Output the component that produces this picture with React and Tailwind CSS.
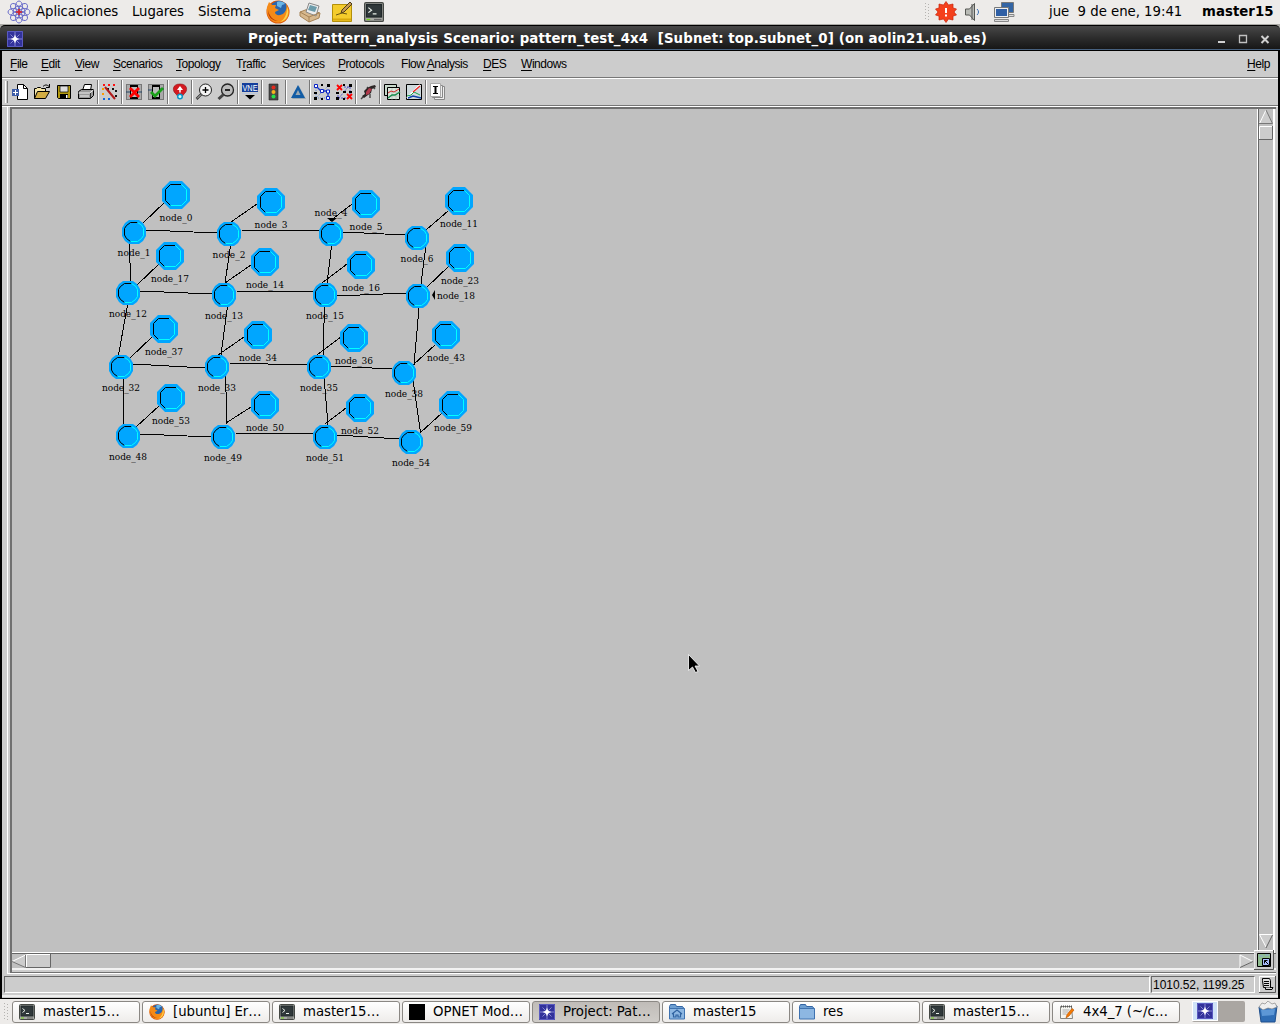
import React from "react";

const bigNodes = [
  ["node_0", 176, 195], ["node_3", 271, 202], ["node_5", 366, 204], ["node_11", 459, 201],
  ["node_17", 170, 256], ["node_14", 265, 262], ["node_16", 361, 265], ["node_23", 460, 258],
  ["node_37", 164, 329], ["node_34", 258, 335], ["node_36", 354, 338], ["node_43", 446, 335],
  ["node_53", 171, 398], ["node_50", 265, 405], ["node_52", 360, 408], ["node_59", 453, 405],
];

// name, x, y, optional label x, optional label baseline
const smallNodes = [
  ["node_1", 134, 232], ["node_2", 229, 234], ["node_4", 331, 234, 331, 216], ["node_6", 417, 238],
  ["node_12", 128, 293], ["node_13", 224, 295], ["node_15", 325, 295], ["node_18", 418, 296, 456, 299],
  ["node_32", 121, 367], ["node_33", 217, 367], ["node_35", 319, 367], ["node_38", 404, 373],
  ["node_48", 128, 436], ["node_49", 223, 437], ["node_51", 325, 437], ["node_54", 411, 442],
];

const links = [
  [146, 230, 217, 233], [241, 230, 320, 231], [343, 232, 405, 235],
  [140, 291, 212, 294], [236, 291, 313, 292], [337, 296, 406, 293],
  [133, 364, 205, 368], [229, 363, 307, 365], [331, 366, 392, 369],
  [140, 434, 211, 437], [235, 433, 313, 434], [337, 435, 399, 439],
  [129.5, 243, 130.5, 281], [230.5, 246, 225, 283], [331.5, 246, 327, 284], [426, 245, 421, 284],
  [127.5, 305, 118.5, 355], [227.5, 306, 221, 355], [324.5, 307, 323, 355], [419, 308, 414, 365],
  [123.5, 379, 123.5, 425], [225.5, 375, 227, 424], [324, 377, 328, 425], [413, 380, 420.5, 432],
  [143, 223, 165, 202], [231, 222, 257, 204], [330, 221, 352, 204], [426, 230, 448, 211],
  [137, 285, 159, 264], [225, 283, 251, 265], [322, 283, 347, 264], [426, 288, 449, 266],
  [129, 359, 153, 336], [218, 355, 244, 337], [317, 355, 341, 337], [413, 365, 435, 345],
  [136, 427, 160, 405], [226, 423, 251, 407], [325, 424, 346, 408], [420, 433, 442, 413],
];

function NodeLabel({ name, x, y }) {
  return (
    <text x={x} y={y} textAnchor="middle" fontSize="9" textLength={name.length === 6 ? 33 : 38} fontFamily="'DejaVu Serif', serif" fill="#000">
      {name}
    </text>
  );
}

function Network() {
  return (
    <svg width="1245" height="843" viewBox="12 109 1245 843" className="block">
      <g stroke="#000" strokeWidth="1" shapeRendering="crispEdges">
        {links.map(([a, b, c, d], i) => <line key={i} x1={a} y1={b} x2={c} y2={d} />)}
      </g>
      <path d="M327 218h10l-5 4zM432 295l3-5v10z" />
      {bigNodes.map(([n, x, y]) => (
        <g key={n}>
          <g transform={`translate(${x} ${y})`} fill="none">
            <path d="M-6-14H6L14-6V6L6 14H-6L-14 6V-6Z" fill="#00a6ff" />
            <path d="M-5.5 10.5L-10.5 5.5V-5.5L-5.5-10.5H5" stroke="#000" />
            <path d="M5.5-10.5L10.5-5.5V5.5L5.5 10.5H-5.5" stroke="#00ffff" />
          </g>
          <NodeLabel name={n} x={x} y={y + 26} />
        </g>
      ))}
      {smallNodes.map(([n, x, y, lx, ly]) => (
        <g key={n}>
          <g transform={`translate(${x} ${y})`} fill="none">
            <path d="M-5-12H5L9-9L12-4V4L9 9L5 12H-5L-9 9L-12 4V-4L-9-9Z" fill="#00a6ff" />
            <path d="M-3.5 9.5L-7.5 6.5L-9.5 3V-3.5L-7.5-6.5L-3.5-9.5H3.5" stroke="#000" />
            <path d="M3.5-9.5L7.5-7L9.5-3.5V3.5L7.5 6.5L3.5 9.5H-3.5" stroke="#00ffff" />
          </g>
          <NodeLabel name={n} x={lx || x} y={ly || y + 24} />
        </g>
      ))}
      <path d="M688.5 654.5v16l4-3.500 3 5.500 2.500-1-3-5.500h4.500z" fill="#000" stroke="#fff" strokeWidth=".8" />
    </svg>
  );
}

function TermIcon({ s = 16 }) {
  return (
    <svg width={s} height={s} viewBox="0 0 16 16" className="block shrink-0">
      <rect x=".5" y=".5" width="15" height="15" rx="1" fill="#a8aaa5" stroke="#454844" />
      <rect x="2" y="2" width="12" height="10" fill="#30383a" stroke="#20282a" />
      <path d="M3.500 4.500l2.500 2-2.500 2M7 9.500h3" stroke="#e8efe8" fill="none" />
      <path d="M2 14h3" stroke="#73d216" />
      <path d="M8 14h6" stroke="#666" />
    </svg>
  );
}

function Firefox({ s = 16 }) {
  return (
    <svg width={s} height={s} viewBox="0 0 24 24" className="block shrink-0">
      <circle cx="12" cy="12" r="11.500" fill="#d9560b" />
      <circle cx="13" cy="9.500" r="8.800" fill="#2a65ad" />
      <path d="M11 2c4-1 7 0 8 2l-3 1-1 3-4-2z" fill="#6ab5e6" />
      <path d="M1 7L3 2l3 3 4 0-1 3 4 2-4 2c0 4 6 4 9 1 2-2 3-5 2-9 5 6 4 15-4 18C9 25-1 19 1 7z" fill="#f58a17" />
      <path d="M21 7c3 6 0 14-7 15 5-3 7-8 7-15z" fill="#ffd24a" />
      <path d="M2 10c1 6 5 10 10 11-6 0-10-4-10-11z" fill="#b53304" />
    </svg>
  );
}

function Star({ s = 16 }) {
  return (
    <svg width={s} height={s} viewBox="0 0 16 16" className="block shrink-0">
      <rect width="16" height="16" fill="#32329b" />
      <path d="M.5.500h15v15H.500z" stroke="#5a5ac0" fill="none" />
      <path d="M8 1v14M1 8h14M3.500 3.500l9 9M12.500 3.500l-9 9" stroke="#9c9cdf" strokeWidth=".8" />
      <path d="M8 3.500l1.200 3.300L12.500 8 9.200 9.200 8 12.500 6.800 9.200 3.500 8l3.300-1.200z" fill="#fff" />
    </svg>
  );
}

function Folder({ home }) {
  return (
    <svg width="16" height="16" viewBox="0 0 16 16" className="block shrink-0">
      <path d="M.500 14.500v-12l1-2h5l1 2h6l1.500 2v10z" fill="#6d9fd2" stroke="#3465a4" />
      <path d="M.500 4.500h15v10.500H.500z" fill="#8db7e2" stroke="#3f72b0" />
      {home && <path d="M3 10l5-4 5 4M4.500 9.500V13H7v-2h2v2h2.500V9.500" fill="none" stroke="#2f62a0" strokeWidth="1.200" />}
    </svg>
  );
}

function NoteIcon() {
  return (
    <svg width="16" height="16" viewBox="0 0 16 16" className="block shrink-0">
      <path d="M1.500 2.500h11l1 12h-12z" fill="#f5f5f0" stroke="#85857f" />
      <path d="M2 2.500h11" stroke="#555" strokeWidth="2" strokeDasharray="1 1" />
      <path d="M3.500 6h7M3.500 8h6M3.500 10h4" stroke="#aaa" />
      <path d="M7 14l1-3.500 5-6 2 1.500-5 6z" fill="#f57900" stroke="#b45100" strokeWidth=".6" />
    </svg>
  );
}

const tools = [
  [<g><path d="M5.500.500h6l4 4v11h-10z" fill="#fff" stroke="#000" /><path d="M11.500.500v4h4" fill="none" stroke="#000" /><rect y="5" width="7" height="7" fill="#3d5da8" /><path d="M1 8.500h5M3.500 6v5" stroke="#fff" /></g>,
   <g><path d="M.500 14.500v-10h2l1-1h3l1 1h4v3" fill="#f7e8a8" stroke="#000" /><path d="M.500 14.500l3-7h12l-4 7z" fill="#d3ad43" stroke="#000" /><path d="M9 2.500c2-2 4-2 6 0M15.500 0v3.500H12" fill="none" stroke="#000" /></g>,
   <g><path d="M1.500 1.500h13v13h-12l-1-1z" fill="#b49a10" stroke="#000" /><path d="M4 2h8v6H4z" fill="#ddd" stroke="#000" strokeWidth=".7" /><path d="M4 10h8v5H4z" fill="#000" /><path d="M10 11h1.500v3H10z" fill="#fff" /></g>,
   <g><path d="M4.500 6.500l2-6h7l-1 6" fill="#fff" stroke="#000" /><path d="M.500 7.500l3-2h12v6l-3 3H.500z" fill="#999" stroke="#000" /><path d="M.500 9h11l4-3M2 12h9" stroke="#eee" fill="none" /><path d="M12.500 9v5" stroke="#333" /></g>],
  [<g strokeWidth="2" strokeDasharray="2 3"><path d="M1 1h14" stroke="#f11" /><path d="M1 4v10" stroke="#f90" /><path d="M1 15h8" stroke="#16d" /><path d="M5 5h9v10" stroke="#111" fill="none" /><path d="M3 3l10 12" stroke="#b11a1a" strokeDasharray="none" /></g>],
  [<g><rect x=".5" y=".5" width="15" height="15" fill="#aaa" stroke="#777" /><path d="M4.500 1.500h7v13h-7z" fill="#bbb" stroke="#000" /><path d="M4 2h8M4 14h8" stroke="#000" strokeWidth="2" /><path d="M0 8h4M12 8h4" stroke="#246" /><path d="M4 4l9 9M13 4l-9 9" stroke="#f00" strokeWidth="2.800" /></g>,
   <g><rect x=".5" y=".5" width="15" height="15" fill="#aaa" stroke="#777" /><path d="M4.500 1.500h7v13h-7z" fill="#bbb" stroke="#000" /><path d="M4 2h8M4 14h8" stroke="#000" strokeWidth="2" /><path d="M0 6h4M12 5h4" stroke="#246" /><path d="M3 8l4 4 8-8" stroke="#1aa01a" strokeWidth="2.800" fill="none" /></g>],
  [<g><path d="M8 0c8 0 8 7 4 10l-3 4H7l-3-4C0 7 0 0 8 0z" fill="#d41920" stroke="#8b0d10" strokeWidth=".6" /><path d="M8 3.500v5" stroke="#fff" strokeWidth="1.500" /><path d="M5 6l3-4 3 4z" fill="#fff" /><circle cx="8" cy="12.500" r="2.300" fill="#cff" stroke="#0996c8" strokeWidth="1.500" /></g>],
  [<g><circle cx="9.500" cy="6" r="6" fill="#f4f4f4" stroke="#222" /><path d="M6.500 6h6M9.500 3v6" stroke="#000" strokeWidth="1.300" /><path d="M5.500 10l-5 5" stroke="#333" strokeWidth="2.500" /><path d="M5 10.500l-4 4" stroke="#ccc" /></g>,
   <g><circle cx="9.500" cy="6" r="6" fill="#bbb" stroke="#222" strokeWidth="1.300" /><path d="M7 6h5" stroke="#000" strokeWidth="1.600" /><path d="M5.500 10.500l-5 4.500" stroke="#444" strokeWidth="3" /></g>],
  [<g><rect x="0" y="-1" width="16" height="9" fill="#153f9b" /><text x="8" y="7" textAnchor="middle" textLength="15" lengthAdjust="spacingAndGlyphs" fontSize="9" fontFamily="'Liberation Sans', sans-serif" fill="#fff">VNE</text><path d="M0 9.500h16" stroke="#b9c7df" /><path d="M3 11h10l-5 4.500z" fill="#000" /></g>],
  [<g><path d="M3 0h9v16H3z" fill="#484848" stroke="#222" strokeWidth=".6" /><circle cx="7.500" cy="3.500" r="2" fill="#e42a1e" /><circle cx="7.500" cy="8" r="2" fill="#f5b21d" /><circle cx="7.500" cy="12.500" r="2" fill="#25e048" /></g>],
  [<g><path d="M2 15h14L9 2z" fill="#9aa8b2" /><path d="M1 14h14L8 1zM5.500 11h5L8 6z" fill="#125ca5" fillRule="evenodd" /></g>],
  [<g><path d="M2 2l5 5h7v7" stroke="#1538c8" fill="none" strokeWidth="1.300" /><path d="M2 2v12h12M2 14L14 2" stroke="#6688cc" strokeDasharray="1 1" fill="none" /><path d="M7 0h2v2H7zM13 0h3v3h-3zM0 8h3v2H0zM0 13h3v3H0zM7 14h2v2H7z" fill="#000" /><path d="M.5.500h3v3h-3zM6.500 5.500h3v3h-3zM12.500 6h3v3h-3zM12.500 12.500h3v3h-3z" fill="#fff" stroke="#0a22c4" /></g>,
   <g><path d="M2 8v6h12M8 3h6v9M3 14L12 3" stroke="#55c" strokeDasharray="2 1" fill="none" /><path d="M7 0h2v2H7zM13 0h3v3h-3zM0 8h3v2H0zM0 13h3v3H0zM7 14h2v2H7zM13 7h3v2h-3zM7 7h3v2H7z" fill="#000" /><path d="M1 1l5 5M6 1L1 6M11 10l5 5M16 10l-5 5" stroke="#f00" strokeWidth="1.800" /></g>],
  [<g><path d="M1 15l4-4M7 3l2 2M13 3l2 2M10 10v4" stroke="#444" strokeWidth="1.400" fill="none" /><path d="M4 7l3-3 4-2 4-1 1 2-4 2-1 4-3 2-4 3-2-2 3-2z" fill="#2c2626" /><path d="M6 8l3-4 3 1-3 5-3 1z" fill="#b03a4c" /></g>],
  [<g><path d="M.5.500h12v11H.500z" fill="#c9d9cc" stroke="#000" /><path d="M3.500 3.500h12v12h-12z" fill="#dce7dd" stroke="#000" /><path d="M4 8h12M4 12h12M8 4v12M12 4v12" stroke="#aaa" strokeWidth=".5" /><path d="M4 9l3-2 3 1 5-3" stroke="#d52b2b" fill="none" /><path d="M4 14l4-3h3l5-3" stroke="#178b4b" fill="none" strokeWidth="1.400" /></g>,
   <g><path d="M.5.500h15v15H.500z" fill="#cfdadd" stroke="#000" /><path d="M1 14L14 1" stroke="#fff" strokeWidth="2" /><path d="M1 12l4-1 3-3 6 3" stroke="#19a24b" fill="none" /><path d="M7 8l7-6" stroke="#e22" strokeWidth="1.300" /><path d="M2 14l5-2 8 2" stroke="#14a" fill="none" strokeWidth="1.500" /></g>],
  [<g><path d="M4.500 2.500h10v13h-10z" fill="#eee" stroke="#888" /><path d="M2.500 1.500h10v12h-10z" fill="#eee" stroke="#888" /><path d="M.500-.500h10v13h-10z" fill="#fff" stroke="#aaa" /><path d="M3 2.500h5M3 9.500h5" stroke="#000" /><path d="M5.500 2v8" stroke="#000" strokeWidth="2" /></g>],
];

function Separator() {
  return <div className="w-[2px] h-[24px] bg-[#777] border-r border-white shrink-0" />;
}

const menus = [
  ["w-[31px]", "", "F", "ile"], ["w-[34px]", "", "E", "dit"], ["w-[38px]", "", "V", "iew"],
  ["w-[63px]", "", "S", "cenarios"], ["w-[60px]", "", "T", "opology"], ["w-[46px]", "T", "r", "affic"],
  ["w-[56px]", "Ser", "v", "ices"], ["w-[63px]", "", "P", "rotocols"], ["w-[82px]", "Flow ", "A", "nalysis"],
  ["w-[38px]", "", "D", "ES"], ["w-[60px]", "", "W", "indows"],
];

const tasks = [
  [<TermIcon />, "master15…"], [<Firefox />, "[ubuntu] Er…"], [<TermIcon />, "master15…"],
  [<span className="block size-4 bg-black shrink-0" />, "OPNET Mod…"], [<Star />, "Project: Pat…"],
  [<Folder home />, "master15"], [<Folder />, "res"], [<TermIcon />, "master15…"], [<NoteIcon />, "4x4_7 (~/c…"],
];

function Grip() {
  return (
    <svg width="6" height="18" viewBox="0 0 6 18" className="block shrink-0">
      <path d="M1.500 0v18M4.500 1v17" stroke="#b5b3b0" strokeDasharray="1 2" />
    </svg>
  );
}

function TopPanel() {
  return (
    <div className="h-[25px] shrink-0 flex items-center bg-[#edebe9] border-b border-[#aaa9a5] pl-[7px] text-[13.3px] tracking-[-0.08px]">
      <svg width="24" height="24" viewBox="-12 -12 24 24" className="shrink-0 mr-[5px]">
        <g fill="none" stroke="#5a5ec5" strokeWidth=".9">
          {[0, 45, 90, 135, 180, 225, 270, 315].map((a) => <ellipse key={a} cx="5.500" cy="0" rx="5.500" ry="3.500" transform={`rotate(${a})`} />)}
          <circle r="6" />
        </g>
        <path d="M-3 0h6M0-3v6" stroke="#d22" strokeWidth="1.500" />
      </svg>
      <span className="w-[96px]">Aplicaciones</span>
      <span className="w-[66px]">Lugares</span>
      <span className="w-[68px]">Sistema</span>
      <Firefox s={24} />
      <svg width="22" height="22" viewBox="0 0 22 22" className="ml-[9px] shrink-0">
        <path d="M1 11l8-3 12 4-1 5-10 4-9-6z" fill="#d7b88d" stroke="#a58256" />
        <path d="M10 2l10 3-3 10-10-4z" fill="#eee" stroke="#888" />
        <path d="M11 4l7 2-2 5-7-2z" fill="#6d9cab" />
        <path d="M1 11l9 5 10-4M10 16v5" fill="none" stroke="#a58256" />
      </svg>
      <svg width="22" height="22" viewBox="0 0 22 22" className="ml-[10px] shrink-0">
        <path d="M1.500 3.500h19v17h-19z" fill="#f4cc2c" stroke="#b38f0a" />
        <path d="M2 18.500h18" stroke="#d8a90c" strokeWidth="2" />
        <path d="M10 12l1-3 8-8 2 2-8 8z" fill="#c79a50" stroke="#4b3b1c" />
        <path d="M5 14l6-2 5 1" stroke="#6b5610" fill="none" />
      </svg>
      <div className="ml-[11px]"><TermIcon s={20} /></div>
      <div className="ml-[540px]"><Grip /></div>
      <svg width="22" height="22" viewBox="-11 -11 22 22" className="ml-[5px] shrink-0">
        <path d="M0-10.500L2.500-7 7-8 7-4 10.500-3 8 0 10.500 3 7 4 7 8 2.500 7 0 10.500-2.500 7-7 8-7 4-10.500 3-8 0-10.500-3-7-4-7-8-2.500-7z" fill="#f4401c" stroke="#c9240a" strokeWidth=".7" />
        <path d="M0-4V1M0 2.500v2" stroke="#fff" strokeWidth="2" />
      </svg>
      <svg width="16" height="20" viewBox="0 0 16 20" className="ml-[8px] shrink-0">
        <path d="M.500 7h4l5-5.500v17L4.500 13h-4z" fill="#b9bbb6" stroke="#555753" />
        <path d="M7 2v16" stroke="#555" /><path d="M12 7c2 2 2 4 0 6" fill="none" stroke="#3b6fb0" />
      </svg>
      <svg width="22" height="22" viewBox="0 0 22 22" className="ml-[12px] shrink-0">
        <path d="M8.500 1.500h12v10h-12z" fill="#3465a4" stroke="#77797a" /><path d="M12 13.500h9v2h-9z" fill="#ddd" stroke="#888" />
        <path d="M1.500 6.500h14v10h-14z" fill="#eee" stroke="#77797a" /><path d="M3 8h11v7H3z" fill="#2f5fa5" /><path d="M1.500 18.500h14v2h-14z" fill="#ddd" stroke="#888" />
      </svg>
      <span className="ml-[34px] w-[153px] whitespace-pre tracking-[-0.03px]">jue  9 de ene, 19:41</span>
      <span className="font-bold whitespace-nowrap tracking-[0.05px]">master15</span>
    </div>
  );
}

function TitleBar() {
  return (
    <div className="shrink-0 bg-[#aaa9a5]">
      <div className="h-[26px] flex items-center border-t border-b border-black bg-linear-to-b from-[#484848] via-[#2c2c2c] to-[#151515] rounded-t-[5px] pl-[7px] pt-[2px] shadow-[inset_0_-1px_0_#47617f]">
        <Star />
        <span className="ml-[225px] w-[970px] text-[13.33px] tracking-[0.12px] font-bold text-white whitespace-pre">Project: Pattern_analysis Scenario: pattern_test_4x4  [Subnet: top.subnet_0] (on aolin21.uab.es)</span>
        <svg width="54" height="12" viewBox="0 0 54 12" className="shrink-0">
          <path d="M-1 9h8" stroke="#d0d0d0" strokeWidth="2" />
          <path d="M21.500 2.500h7v7h-7z" fill="none" stroke="#c0c0c0" strokeWidth="1.300" />
          <path d="M43.500 3l7 7M50.500 3l-7 7" stroke="#d0d0d0" strokeWidth="2" />
        </svg>
      </div>
    </div>
  );
}

export default function App() {
  return (
    <div className="w-[1280px] h-[1024px] overflow-hidden flex flex-col bg-[#edebe9] text-black font-['DejaVu_Sans',sans-serif]">
      <TopPanel />
      <TitleBar />
      <div className="h-[948px] shrink-0 flex flex-col bg-[#cccccc] border-l-2 border-r-2 border-b border-black">
        <div className="h-[27px] shrink-0 flex items-center pl-[8px] border-b border-[#777] font-['Liberation_Sans',sans-serif] text-[12px] tracking-[-0.45px]">
          {menus.map(([w, a, u, b]) => (
            <span key={u + b} className={w + " whitespace-pre"}>{a}<span className="underline underline-offset-2">{u}</span>{b}</span>
          ))}
          <span className="ml-auto mr-[8px]"><span className="underline underline-offset-2">H</span>elp</span>
        </div>
        <div className="h-[28px] shrink-0 flex items-center border-t border-t-white border-b border-b-[#777]">
          <div className="w-[3px] h-[22px] ml-[3px] mr-px border-l border-white border-r border-r-[#777]" />
          {tools.map((group, gi) => (
            <React.Fragment key={gi}>
              {gi > 0 && <Separator />}
              {group.map((icon, i) => (
                <svg key={i} width="22" height="22" viewBox="-3 -3 22 22" fill="none" className="block shrink-0">{icon}</svg>
              ))}
            </React.Fragment>
          ))}
        </div>
        <div className="h-[868px] shrink-0 flex pl-[5px] pr-[2px] border-t border-white">
          <div className="flex-1 border-l border-b border-white pl-[2px]">
            <div className="h-[866px] border-t-2 border-l-2 border-b border-[#707070] flex flex-col">
              <div className="h-[844px] flex">
                <div className="w-[1246px] border-b border-r border-white bg-[#c0c0c0]"><Network /></div>
                <div className="w-[17px] border-l border-[#666] border-r-2 border-r-white bg-[#c0c0c0]">
                  <svg width="14" height="844" viewBox="0 0 14 844" className="block" fill="#ccc">
                    <path d="M.500 14.500L7 1l6.500 13.500z" /><path d="M.500 14.500L7 1" stroke="#fff" /><path d="M7 1l6.500 13.500H0" stroke="#777" fill="none" />
                    <path d="M.500 17.500h13v13H.500z" stroke="#fff" /><path d="M13.500 17v13.500H0" stroke="#666" fill="none" />
                    <path d="M.500 825.500h13L7 838z" /><path d="M7 838L.500 825.500h13" stroke="#fff" fill="none" /><path d="M13.500 826L7 839" stroke="#666" />
                  </svg>
                </div>
              </div>
              <div className="h-[17px] flex bg-[#c0c0c0] border-t border-[#666] border-b-2 border-b-[#f2f2f2]">
                <svg width="1242" height="14" viewBox="0 0 1242 14" className="block" fill="#ccc">
                  <path d="M0 7.500L13.500 1v13z" /><path d="M0 7.500L13.500 1" stroke="#fff" /><path d="M0 7.500l13.500 6V1" stroke="#777" fill="none" />
                  <path d="M14.500.500h24v13h-24z" stroke="#fff" /><path d="M38.500 0v13.500H14" stroke="#666" fill="none" />
                  <path d="M1228 1v13l13-6z" /><path d="M1241 7.500l-13-6.500v13" stroke="#fff" fill="none" /><path d="M1228 13.500l13-6" stroke="#666" />
                </svg>
                <svg width="20" height="20" viewBox="0 0 20 20" className="block -mt-[4px] shrink-0">
                  <path d="M0 0h20v20H0z" fill="#ccc" /><path d="M0 19.500V.500h19" stroke="#fff" fill="none" /><path d="M19.500 0v19.500H0" stroke="#555" fill="none" />
                  <path d="M3.500 3.500h13v13h-13z" fill="#8fbc8f" stroke="#000" /><path d="M5 6h4M11 5h4" stroke="#8aa7d8" /><path d="M8.500 8.500h7v7h-7z" fill="#aabfff" stroke="#000" />
                  <path d="M10.500 13.500v-3h3M10.500 10.500l4 4" stroke="#000" fill="none" />
                </svg>
              </div>
            </div>
          </div>
        </div>
        <div className="h-[17px] mt-[2px] ml-[2px] mr-[2px] flex shrink-0">
          <div className="w-[1147px] border border-[#666] border-b-white border-r-white" />
          <div className="w-[104px] ml-px border-t border-l border-[#666] border-b border-b-white border-r border-r-white font-['Liberation_Sans',sans-serif] text-[12px] tracking-[-0.08px] leading-[16px] pl-px whitespace-nowrap">1010.52, 1199.25</div>
          <svg width="17" height="17" viewBox="0 0 17 17" className="ml-[4px] block">
            <path d="M.500 16V.500H16" stroke="#fff" fill="none" /><path d="M16.500 0v16.500H0" stroke="#555" fill="none" />
            <path d="M3.500 2.500h7l1 2v7h-7l-1-7z" fill="#ddd" stroke="#000" /><path d="M5 5.500h5M5 7.500h5M5 9.500h5" stroke="#000" /><path d="M6.500 11.500v2h6.500l1-2h-3" fill="#ddd" stroke="#000" />
          </svg>
        </div>
        <div className="mt-[2px] h-[2px] bg-[#eee]" />
      </div>
      <div className="h-[25px] shrink-0 flex items-center pl-[3px] text-[13.3px] tracking-[-0.05px]">
        <div className="w-[9px]"><Grip /></div>
        {tasks.map(([icon, label], i) => (
          <div key={i} className={(i === 4 ? "bg-linear-to-b from-[#c0bcb8] to-[#cfccc8] " : "bg-linear-to-b from-white to-[#eeecea] ") + "w-[128px] h-[22px] mr-[2px] shrink-0 flex items-center border border-[#8b8884] rounded-[3px] pl-[6px] gap-2 whitespace-nowrap"}>
            {icon}<span>{label}</span>
          </div>
        ))}
        <div className="ml-[10px] flex w-[53px] h-[21px] bg-[#aaa6a2] rounded-[2px] shrink-0">
          <div className="w-[26px] h-[20px] bg-[#cfe2f8] border border-white flex items-center justify-center"><Star /></div>
        </div>
        <svg width="22" height="22" viewBox="0 0 22 22" className="ml-[12px] shrink-0">
          <path d="M2 6l18-1-2 16H4z" fill="#2f6db5" stroke="#1f4f8c" />
          <path d="M2 6l3-4 3 1 3-3 4 3 3-1 2 4-5 2-4-1-5 2z" fill="#eee" stroke="#888" strokeWidth=".7" />
          <path d="M4 9l14-1-1 6-12 1z" fill="#5d97d6" />
        </svg>
      </div>
    </div>
  );
}
